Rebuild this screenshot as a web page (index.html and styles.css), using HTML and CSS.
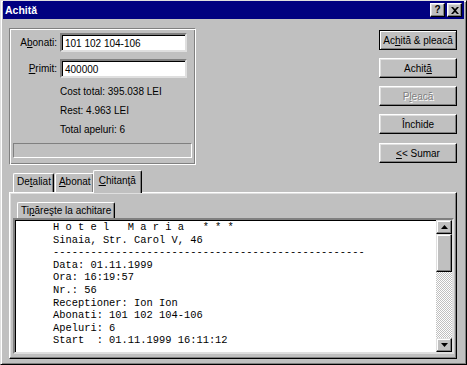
FILE: index.html
```html
<!DOCTYPE html>
<html lang="ro">
<head>
  <meta charset="UTF-8">
  <title>Achită</title>
  <link rel="stylesheet" href="styles.css">
</head>
<body>
  <div class="window">
    <div class="titlebar">
      <span class="title">Achită</span>
      <div class="title-buttons">
        <span class="tbtn help">?</span>
        <span class="tbtn close">
          <svg width="8" height="7" viewBox="0 0 8 7"><path d="M0 0h2l2 2 2-2h2L5 3.5 8 7H6L4 5 2 7H0l3-3.5z" fill="#000"/></svg>
        </span>
      </div>
    </div>
    <div class="content">
      <div class="top">
        <div class="group">
          <div class="field">
            <label>A<u>b</u>onati:</label>
            <div class="input">101 102 104-106</div>
          </div>
          <div class="field">
            <label><u>P</u>rimit:</label>
            <div class="input">400000</div>
          </div>
          <div class="info">
            <p>Cost total: 395.038 LEI</p>
            <p>Rest: 4.963 LEI</p>
            <p>Total apeluri: 6</p>
          </div>
          <div class="status"></div>
        </div>
        <div class="buttons">
          <div class="btn default"><span>Ac<u>h</u>ită &amp; pleacă</span></div>
          <div class="btn"><span>Achit<u>ă</u></span></div>
          <div class="btn disabled"><span>P<u>l</u>eacă</span></div>
          <div class="btn"><span>Închide</span></div>
          <div class="btn sumar"><span><u>&lt;</u>&lt; Sumar</span></div>
        </div>
      </div>
      <div class="tabs">
        <div class="tab">De<u>t</u>aliat</div>
        <div class="tab"><u>A</u>bonat</div>
        <div class="tab active"><u>C</u>hitanţă</div>
      </div>
      <div class="tabpanel">
        <div class="subtab">Ti<u>p</u>ăreşte la achitare</div>
        <div class="textbox">
<pre class="receipt">H o t e l   M a r i a   * * *
Sinaia, Str. Carol V, 46
--------------------------------------------------
Data: 01.11.1999
Ora: 16:19:57
Nr.: 56
Receptioner: Ion Ion
Abonati: 101 102 104-106
Apeluri: 6
Start  : 01.11.1999 16:11:12</pre>
          <div class="scrollbar">
            <div class="sbtn"><svg width="7" height="4" viewBox="0 0 7 4"><path d="M3.5 0L7 4H0z" fill="#000"/></svg></div>
            <div class="thumb"></div>
            <div class="track"></div>
            <div class="sbtn"><svg width="7" height="4" viewBox="0 0 7 4"><path d="M0 0h7L3.5 4z" fill="#000"/></svg></div>
          </div>
        </div>
      </div>
    </div>
  </div>
</body>
</html>
```
FILE: styles.css
```css
body {
  margin: 0;
  background: #c0c0c0;
  font-family: "Liberation Sans", Arial, sans-serif;
  font-size: 10px;
  color: #000;
}
.window {
  width: 467px;
  height: 365px;
  box-sizing: border-box;
  border: 1px solid;
  border-color: #dfdfdf #000 #000 #dfdfdf;
  box-shadow: inset 1px 1px #fff, inset -1px -1px #808080;
  padding: 0 2px 2px;
  display: flex;
  flex-direction: column;
}
.titlebar {
  height: 18px;
  background: #000080;
  color: #fff;
  display: flex;
  align-items: center;
  justify-content: space-between;
  padding: 0 2px 0 2px;
  font-weight: bold;
  font-size: 10.5px;
}
.title-buttons {
  display: flex;
  gap: 2px;
}
.tbtn {
  width: 15px;
  height: 14px;
  box-sizing: border-box;
  background: #c0c0c0;
  color: #000;
  border: 1px solid;
  border-color: #fff #000 #000 #fff;
  box-shadow: inset -1px -1px #808080, inset 1px 1px #dfdfdf;
  display: flex;
  align-items: center;
  justify-content: center;
  font-size: 10px;
  font-weight: bold;
  line-height: 1;
}

/* main area */
.content {
  flex: 1;
  padding: 9px 7px 0 6px;
  display: flex;
  flex-direction: column;
}
.top {
  display: flex;
  justify-content: space-between;
}
.group {
  width: 187px;
  height: 137px;
  box-sizing: border-box;
  border: 1px solid;
  border-color: #808080 #fff #fff #808080;
  box-shadow: inset 1px 1px #fff, inset -1px -1px #808080;
  padding: 4px 3px 0 3px;
}
.field {
  display: flex;
  align-items: center;
  margin-bottom: 7px;
}
.field label {
  width: 44px;
  text-align: right;
  padding-right: 3px;
}
.input {
  width: 127px;
  height: 19px;
  box-sizing: border-box;
  background: #fff;
  border: 2px solid;
  border-color: #808080 #dfdfdf #dfdfdf #808080;
  box-shadow: inset 1px 1px #000;
  padding: 2px 0 0 3px;
  line-height: 14px;
}
.info {
  margin: -3px 0 0 47px;
}
.info p {
  margin: 0;
  line-height: 19px;
}
.status {
  margin-top: 4px;
  height: 15px;
  box-sizing: border-box;
  border: 1px solid;
  border-color: #808080 #fff #fff #808080;
}

.buttons {
  display: flex;
  flex-direction: column;
  gap: 8px;
  margin-top: 2px;
  width: 78px;
}
.btn {
  height: 20px;
  box-sizing: border-box;
  border: 1px solid;
  border-color: #fff #000 #000 #fff;
  box-shadow: inset -1px -1px #808080, inset 1px 1px #dfdfdf;
  display: flex;
  align-items: center;
  justify-content: center;
}
.btn.default {
  border: 1px solid #000;
  box-shadow: inset 1px 1px #fff, inset -1px -1px #808080, inset -2px -2px #c0c0c0;
}
.btn.disabled {
  color: #808080;
  text-shadow: 1px 1px #fff;
}
.btn.sumar {
  margin-top: 1px;
}

/* tabs */
.tabs {
  display: flex;
  align-items: flex-end;
  margin-top: 5px;
  padding-left: 4px;
  height: 22px;
  position: relative;
  z-index: 1;
}
.tab {
  height: 19px;
  box-sizing: border-box;
  padding: 2px 2px 0 3px;
  border: 1px solid;
  border-bottom: 0;
  border-color: #fff #000 #000 #fff;
  border-radius: 2px 2px 0 0;
  box-shadow: inset -1px 0 #808080;
  margin-right: 1px;
  background: #c0c0c0;
}
.tab.active {
  height: 23px;
  margin: 0 -2px -1px -2px;
  padding: 4px 5px 0 5px;
}
.tabpanel {
  height: 167px;
  box-sizing: border-box;
  border: 1px solid;
  border-color: #fff #000 #000 #fff;
  box-shadow: inset -1px -1px #808080, inset 1px 1px #dfdfdf;
  padding: 9px 2px 4px 3px;
  display: flex;
  flex-direction: column;
}
.subtab {
  align-self: flex-start;
  margin-left: 4px;
  height: 16px;
  box-sizing: border-box;
  padding: 2px 3px 0 3px;
  border: 1px solid;
  border-bottom: 0;
  border-color: #fff #000 #000 #fff;
  border-radius: 2px 2px 0 0;
  box-shadow: inset -1px 0 #808080;
}
.textbox {
  flex: 1;
  display: flex;
  background: #fff;
  border: 2px solid;
  border-color: #808080 #dfdfdf #dfdfdf #808080;
  box-shadow: inset 1px 1px #000;
  min-height: 0;
}
.receipt {
  flex: 1;
  margin: 0;
  padding: 1px 0 0 38px;
  font-family: "Liberation Mono", "Courier New", monospace;
  font-size: 10.4px;
  line-height: 12.6px;
  overflow: hidden;
}
.scrollbar {
  width: 16px;
  display: flex;
  flex-direction: column;
}
.sbtn {
  height: 14px;
  box-sizing: border-box;
  background: #c0c0c0;
  border: 1px solid;
  border-color: #dfdfdf #000 #000 #dfdfdf;
  box-shadow: inset -1px -1px #808080, inset 1px 1px #fff;
  display: flex;
  align-items: center;
  justify-content: center;
}
.thumb {
  height: 38px;
  box-sizing: border-box;
  background: #c0c0c0;
  border: 1px solid;
  border-color: #dfdfdf #000 #000 #dfdfdf;
  box-shadow: inset -1px -1px #808080, inset 1px 1px #fff;
}
.track {
  flex: 1;
  background: repeating-conic-gradient(#fff 0 25%, #c0c0c0 0 50%) 0 0 / 2px 2px;
}
```
